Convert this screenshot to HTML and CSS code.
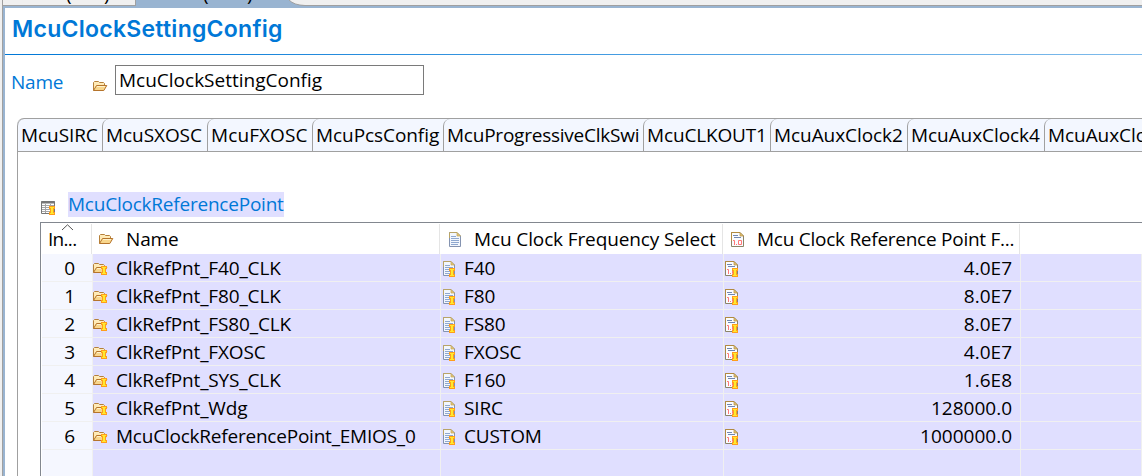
FILE: index.html
```
<!DOCTYPE html>
<html lang="en">
<head>
<meta charset="utf-8">
<title>McuClockSettingConfig</title>
<link rel="stylesheet" href="styles.css">
</head>
<body>
<svg class="symbols" width="0" height="0">
  <symbol id="folder" viewBox="0 0 16 12">
    <path d="M1.5 10.5V2.5L2.5 1.5H6.5L7.5 2.5H11.5L12.5 3.5V5" fill="#fff0c4" stroke="#b5803a"/>
    <path d="M2 10V2.5H6.5L7.5 3.5H12V5.5H4.5Z" fill="#ffeab5"/>
    <path d="M1.5 10.5L4.5 5.5H14.8L11.8 10.5Z" fill="#f8d68c" stroke="#b5742c"/>
    <path d="M5 6.5H13" stroke="#fff2cb"/>
  </symbol>
  <symbol id="mark" viewBox="0 0 6 9">
    <path d="M0 0H6V3H5V6H6V9H0V6H1V3H0Z" fill="#ff9d1c"/>
    <path d="M1 1H5V2H4V7H5V8H1V7H2V2H1Z" fill="#ffe92e"/>
  </symbol>
  <symbol id="doc" viewBox="0 0 12 15">
    <path d="M.5 .5H8L11.5 4V14.5H.5Z" fill="#f3f7fd" stroke="#8493b0"/>
    <path d="M.5 6V.5H8" fill="none" stroke="#b9a466"/>
    <path d="M8 .5V4H11.5Z" fill="#e5c877" stroke="#c3a557" stroke-width=".7"/>
    <path d="M2 4.5H7M2 6.5H10M2 8.5H10M2 10.5H10M2 12.5H9" stroke="#8fa8cf"/>
  </symbol>
  <symbol id="real" viewBox="0 0 13 15">
    <path d="M.5 .5H9L12.5 4V14.5H.5Z" fill="#fafcff" stroke="#8b8468"/>
    <path d="M.5 9V.5H9" fill="none" stroke="#b18a40"/>
    <path d="M9 .5V4H12.5Z" fill="#e5c877" stroke="#b18a40" stroke-width=".7"/>
    <path d="M2 3.5H7M3 5.5H10" stroke="#7187b2"/>
    <path d="M2 8.5H3.5V13M5 12.5H6M7.5 8.5H10.5V12.5H7.5Z" fill="none" stroke="#ff7777"/>
  </symbol>
  <symbol id="folder-mark" viewBox="0 0 16 14">
    <use href="#folder" width="16" height="12"/>
    <use href="#mark" x="9" y="4" width="6" height="9"/>
  </symbol>
  <symbol id="doc-mark" viewBox="0 0 13 16">
    <use href="#doc" width="12" height="15"/>
    <use href="#mark" x="6" y="7" width="6" height="9"/>
  </symbol>
  <symbol id="real-mark" viewBox="0 0 14 16">
    <use href="#real" width="13" height="15"/>
    <use href="#mark" x="7" y="7" width="6" height="9"/>
  </symbol>
  <symbol id="table" viewBox="0 0 15 14">
    <path d="M.5 .5H13.5V12.5H.5Z" fill="#fff" stroke="#777"/>
    <path d="M0 1.5H14" stroke="#777" stroke-width="2"/>
    <path d="M1 4.5H13M1 6.5H13M1 8.5H13M1 10.5H13M4.5 3V12M9.5 3V12" stroke="#a5a5a5"/>
    <use href="#mark" x="8" y="5" width="6" height="9"/>
  </symbol>
</svg>
<div class="editor">
  <div class="file-tabs">
    <div class="file-tab first"><span>(</span><span>)</span></div>
    <div class="file-tab current"><span>(</span><span>)</span>
      <svg class="curve" width="22" height="6" viewBox="0 0 22 6"><path d="M0 0Q5 5 16 5.5H22V6H0Z" fill="#99b4d1"/><path d="M0 0Q5 5.2 16 5.5H22" fill="none" stroke="#a0a0a0"/></svg>
    </div>
  </div>
  <div class="form">
    <h1 class="title">McuClockSettingConfig</h1>
    <div class="rule"></div>
    <div class="name-row">
      <label class="label">Name</label>
      <svg class="name-icon" width="16" height="12"><use href="#folder"/></svg>
      <div class="field">McuClockSettingConfig</div>
    </div>
    <div class="tabs">
      <div class="tab sirc">McuSIRC</div>
      <div class="tab sxosc">McuSXOSC</div>
      <div class="tab fxosc">McuFXOSC</div>
      <div class="tab pcs">McuPcsConfig</div>
      <div class="tab progressive">McuProgressiveClkSwi</div>
      <div class="tab clkout">McuCLKOUT1</div>
      <div class="tab aux">McuAuxClock2</div>
      <div class="tab aux">McuAuxClock4</div>
      <div class="tab aux">McuAuxClo</div>
    </div>
    <div class="pane">
      <div class="section">
        <svg width="15" height="14"><use href="#table"/></svg>
        <span class="section-title">McuClockReferencePoint</span>
      </div>
      <div class="grid">
        <div class="head">
          <div class="th index"><svg class="caret" width="13" height="7" viewBox="0 0 13 7"><path d="M1 6L6.5 .8L12 6" fill="none" stroke="#555"/></svg>In...</div>
          <div class="th name"><svg width="16" height="12"><use href="#folder"/></svg><span>Name</span></div>
          <div class="th select"><svg width="12" height="15"><use href="#doc"/></svg><span>Mcu Clock Frequency Select</span></div>
          <div class="th freq"><svg width="13" height="15"><use href="#real"/></svg><span>Mcu Clock Reference Point F...</span></div>
        </div>
        <div class="row"><div class="td index">0</div><div class="td name"><svg width="16" height="14"><use href="#folder-mark"/></svg><span>ClkRefPnt_F40_CLK</span></div><div class="td select"><svg width="13" height="16"><use href="#doc-mark"/></svg><span>F40</span></div><div class="td freq"><svg width="14" height="16"><use href="#real-mark"/></svg><span>4.0E7</span></div><div class="td rest"></div></div>
        <div class="row"><div class="td index">1</div><div class="td name"><svg width="16" height="14"><use href="#folder-mark"/></svg><span>ClkRefPnt_F80_CLK</span></div><div class="td select"><svg width="13" height="16"><use href="#doc-mark"/></svg><span>F80</span></div><div class="td freq"><svg width="14" height="16"><use href="#real-mark"/></svg><span>8.0E7</span></div><div class="td rest"></div></div>
        <div class="row"><div class="td index">2</div><div class="td name"><svg width="16" height="14"><use href="#folder-mark"/></svg><span>ClkRefPnt_FS80_CLK</span></div><div class="td select"><svg width="13" height="16"><use href="#doc-mark"/></svg><span>FS80</span></div><div class="td freq"><svg width="14" height="16"><use href="#real-mark"/></svg><span>8.0E7</span></div><div class="td rest"></div></div>
        <div class="row"><div class="td index">3</div><div class="td name"><svg width="16" height="14"><use href="#folder-mark"/></svg><span>ClkRefPnt_FXOSC</span></div><div class="td select"><svg width="13" height="16"><use href="#doc-mark"/></svg><span>FXOSC</span></div><div class="td freq"><svg width="14" height="16"><use href="#real-mark"/></svg><span>4.0E7</span></div><div class="td rest"></div></div>
        <div class="row"><div class="td index">4</div><div class="td name"><svg width="16" height="14"><use href="#folder-mark"/></svg><span>ClkRefPnt_SYS_CLK</span></div><div class="td select"><svg width="13" height="16"><use href="#doc-mark"/></svg><span>F160</span></div><div class="td freq"><svg width="14" height="16"><use href="#real-mark"/></svg><span>1.6E8</span></div><div class="td rest"></div></div>
        <div class="row"><div class="td index">5</div><div class="td name"><svg width="16" height="14"><use href="#folder-mark"/></svg><span>ClkRefPnt_Wdg</span></div><div class="td select"><svg width="13" height="16"><use href="#doc-mark"/></svg><span>SIRC</span></div><div class="td freq"><svg width="14" height="16"><use href="#real-mark"/></svg><span>128000.0</span></div><div class="td rest"></div></div>
        <div class="row"><div class="td index">6</div><div class="td name"><svg width="16" height="14"><use href="#folder-mark"/></svg><span class="long">McuClockReferencePoint_EMIOS_0</span></div><div class="td select"><svg width="13" height="16"><use href="#doc-mark"/></svg><span>CUSTOM</span></div><div class="td freq"><svg width="14" height="16"><use href="#real-mark"/></svg><span>1000000.0</span></div><div class="td rest"></div></div>
        <div class="row"><div class="td index"></div><div class="td name"></div><div class="td select"></div><div class="td freq"></div><div class="td rest"></div></div>
      </div>
    </div>
  </div>
</div>
</body>
</html>
```
FILE: styles.css
```
* { box-sizing: border-box; }
body {
  margin: 0;
  height: 476px;
  overflow: hidden;
  background: #f0f0f0;
  color: #000;
  font: 19px/28px "Open Sans", "Noto Sans", sans-serif;
  white-space: nowrap;
}
svg { display: block; flex: none; }
.symbols { position: absolute; }
.editor { margin-left: 2px; height: 476px; border-left: 1px solid #a0a0a0; overflow: hidden; }

.file-tabs { display: flex; height: 6px; border-bottom: 1px solid #a0a0a0; line-height: 20px; }
.file-tab { display: flex; flex: none; height: 5px; }
.file-tab span { flex: none; margin-top: -16px; height: 20px; width: 8px; }
.first { width: 132px; padding-left: 63px; gap: 30px; }
.current { width: 177px; height: 6px; border-left: 1px solid #a0a0a0; background: linear-gradient(#99b4d1, #99b4d1) 0 0 / 153px 6px no-repeat; padding-left: 67px; gap: 36px; }
.curve { margin-left: -2px; }

.form { height: 470px; border-top: 2px solid #99b4d1; border-left: 2px solid #99b4d1; background: #fff; }
.title { margin: 0; height: 46px; padding: 6px 0 0 7px; color: #0078d7; font: 600 23px/30px Inter, sans-serif; letter-spacing: .26px; }
.rule { height: 1px; background: linear-gradient(90deg, #0078d7, #7fbbeb); }
.name-row { display: flex; height: 63px; padding: 10px 0 0 6px; }
.label { width: 81px; margin-top: 3px; color: #0078d7; letter-spacing: -.2px; }
.name-icon { margin-top: 15px; }
.field { width: 309px; height: 30px; margin-left: 7px; padding-left: 3px; border: 1px solid #7a7a7a; line-height: 29px; }

.tabs { display: flex; height: 34px; margin-left: 12px; border-top: 1px solid #a0a0a0; border-bottom: 1px solid #a0a0a0; border-top-left-radius: 7px; background: #f3f7ff; }
.tab { flex: none; height: 32px; padding-left: 3px; border-left: 1px solid #a0a0a0; border-top-left-radius: 7px; line-height: 33px; letter-spacing: -.07px; }
.sirc { width: 85px; }
.sxosc, .fxosc { width: 105px; }
.fxosc { letter-spacing: .1px; }
.pcs { width: 131px; }
.progressive { width: 200px; letter-spacing: -.23px; }
.clkout { width: 127px; letter-spacing: -.15px; }
.aux { width: 137px; }

.pane { height: 324px; margin-left: 12px; border-left: 1px solid #a0a0a0; padding-left: 22px; }
.section { display: flex; height: 70px; padding: 49px 0 0 1px; }
.section-title { height: 25px; margin: -9px 0 0 12px; background: #e0dfff; color: #0078d7; line-height: 24px; letter-spacing: -.22px; }
.grid { height: 254px; padding-left: 1px; border-top: 1px solid #82878f; border-left: 1px solid #82878f; }
.head, .row { display: grid; }
.head { grid-template-columns: 50px 348px 283px 297px 1fr; height: 31px; padding-top: 1px; }
.th { display: flex; align-items: center; height: 30px; border-right: 1px solid #e5e5e5; letter-spacing: -.12px; }
.th.index { position: relative; padding-left: 6px; letter-spacing: -.7px; }
.caret { position: absolute; left: 19px; top: 0; }
.th.name { padding-left: 6px; gap: 12px; }
.th.select { padding-left: 9px; gap: 13px; }
.th.freq { padding-left: 8px; gap: 13px; letter-spacing: -.26px; }
.row { grid-template-columns: 51px 348px 283px 297px 1fr; height: 28px; }
.td { display: flex; align-items: center; height: 28px; border-right: 1px solid #f0f0f0; border-bottom: 1px solid #f0f0f0; background: #e0dfff; letter-spacing: -.14px; }
.td svg { margin-top: 3px; }
.td.index { justify-content: flex-end; padding-right: 17px; background: #f5f7ff; }
.td.name { gap: 7px; }
.td.name svg { margin-left: -1px; margin-right: 1px; }
.long { letter-spacing: -.22px; }
.td.select { padding-left: 2px; gap: 8px; }
.td.freq { justify-content: space-between; padding: 0 8px 0 1px; letter-spacing: 0; }
```
